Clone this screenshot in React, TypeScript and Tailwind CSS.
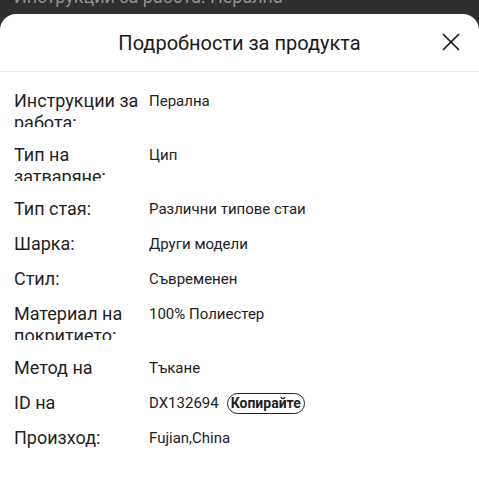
import { X } from 'lucide-react';

type Row = { label: string; value: string; tall?: boolean; copy?: boolean };

const rows: Row[] = [
  { label: 'Инструкции за работа:', value: 'Перална', tall: true },
  { label: 'Тип на затваряне:', value: 'Цип', tall: true },
  { label: 'Тип стая:', value: 'Различни типове стаи' },
  { label: 'Шарка:', value: 'Други модели' },
  { label: 'Стил:', value: 'Съвременен' },
  { label: 'Материал на покритието:', value: '100% Полиестер', tall: true },
  { label: 'Метод на', value: 'Тъкане' },
  { label: 'ID на', value: 'DX132694', copy: true },
  { label: 'Произход:', value: 'Fujian,China' },
];

const App = () => {
  return (
    <div className="w-[479px] h-[480px] bg-[#2f2f2f] font-['Roboto','Noto_Sans',sans-serif] overflow-hidden">
      {/* Page behind the sheet */}
      <div className="h-[14px] overflow-hidden px-[14px]">
        <p className="-mt-[14px] text-[18px] leading-[21px] text-[#8f8f8f] whitespace-nowrap">
          Инструкции за работа: Перална
        </p>
      </div>

      {/* Bottom sheet */}
      <div className="bg-white rounded-t-[16px] h-[466px]">
        <div className="relative h-[58px] flex items-center justify-center border-b border-[#ececec]">
          <h2 className="text-[20px] text-[#1a1a1a]">Подробности за продукта</h2>
          <button className="absolute right-[13px] top-[13px] text-[#1a1a1a]">
            <X size={30} strokeWidth={1.4} />
          </button>
        </div>

        <div className="pt-[18px] px-[14px]">
          {rows.map((row) => (
            <div key={row.label} className={`flex items-start ${row.tall ? 'h-[54px]' : 'h-[35px]'}`}>
              <div className="w-[135px] shrink-0 pr-[4px] max-h-[37px] overflow-hidden text-[18px] leading-[22px] text-[#1f1f1f]">
                {row.label}
              </div>
              <div className="flex items-center gap-[8px] text-[15px] leading-[22px] text-[#222]">
                <span>{row.value}</span>
                {row.copy && (
                  <span className="border border-[#222] rounded-full px-[3px] h-[21px] flex items-center text-[14px] font-bold leading-none">
                    Копирайте
                  </span>
                )}
              </div>
            </div>
          ))}
        </div>
      </div>
    </div>
  );
};

export default App;
